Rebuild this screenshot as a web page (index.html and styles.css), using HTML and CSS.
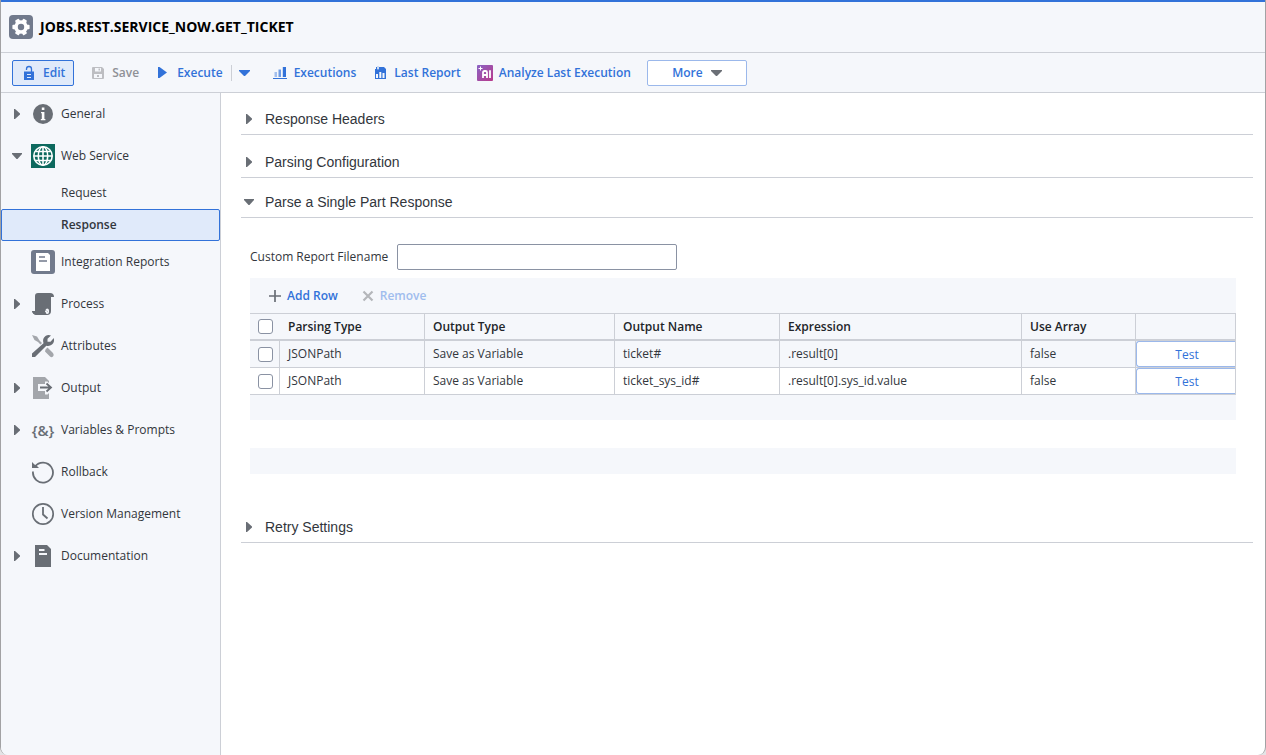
FILE: index.html
```html
<!DOCTYPE html>
<html lang="en">
<head>
<meta charset="utf-8">
<title>JOBS.REST.SERVICE_NOW.GET_TICKET</title>
<link rel="stylesheet" href="styles.css">
</head>
<body>
<div class="app">
  <header class="title-bar">
    <svg class="title-icon" width="24" height="24" viewBox="0 0 24 24">
      <rect width="24" height="24" rx="4" fill="#717a8c"/>
      <g fill="#fff">
        <circle cx="12" cy="12" r="6.8"/>
        <rect x="9.8" y="3.400" width="4.400" height="17.200" rx="1" transform="rotate(30 12 12)"/>
        <rect x="9.8" y="3.400" width="4.400" height="17.200" rx="1" transform="rotate(90 12 12)"/>
        <rect x="9.8" y="3.400" width="4.400" height="17.200" rx="1" transform="rotate(150 12 12)"/>
      </g>
      <circle cx="12" cy="12" r="3.200" fill="#717a8c"/>
    </svg>
    <h1 class="title">JOBS.REST.SERVICE_NOW.GET_TICKET</h1>
  </header>

  <div class="toolbar" role="toolbar" aria-label="Actions">
    <button class="tool tool-edit" type="button">
      <svg width="12" height="16" viewBox="0 0 12 16"><path d="M3.500 5V4a2.500 2.500 0 0 1 5 0v3" fill="none" stroke="#3272d9" stroke-width="1.300"/><path d="M1 6.500h10V15H1z" fill="#3272d9"/><path d="M4 9.500h4M4 12.500h4" stroke="#e0eafa"/></svg>
      Edit
    </button>
    <button class="tool tool-save" type="button" disabled>
      <svg width="12" height="12" viewBox="0 0 12 12"><path d="M1 0h9l2 2v9a1 1 0 0 1-1 1H1a1 1 0 0 1-1-1V1a1 1 0 0 1 1-1z" fill="#bdbec2"/><path d="M3 1h6v3.500H3zM2 7h8v4H2z" fill="#f5f7fb"/><path d="M6.500 1.500H8v2H6.500zM5 8h2v2H5z" fill="#bdbec2"/></svg>
      Save
    </button>
    <button class="tool tool-execute" type="button">
      <svg width="9" height="11" viewBox="0 0 9 11"><path d="M0 0h1.500L9 5.500 1.500 11H0z" fill="#3272d9"/></svg>
      Execute
    </button>
    <button class="tool tool-split" type="button" aria-label="Execute options">
      <svg width="11" height="6" viewBox="0 0 11 6"><path d="M0 0h11v1L6 6H5L0 1z" fill="#3272d9"/></svg>
    </button>
    <button class="tool tool-executions" type="button">
      <svg width="14" height="13" viewBox="0 0 14 13"><path d="M0 12.500h14" stroke="#3272d9"/><path d="M1.500 6h2.500v5H1.500z" fill="#a3bfed"/><path d="M5.500 3.500H8V11H5.500z" fill="#6f9ce4"/><path d="M9.800 1H13v10H9.800z" fill="#3272d9"/></svg>
      Executions
    </button>
    <button class="tool tool-report" type="button">
      <svg width="11" height="13" viewBox="0 0 11 13"><path d="M0 3h1V1h1v2h2V1h5l2 2v10H0z" fill="#3272d9"/><path d="M1 8h2v4H1zM4.300 6h2v6h-2zM7.500 7h2v5h-2z" fill="#f5f7fb"/><path d="M3 0v4" stroke="#a3bfed"/></svg>
      Last Report
    </button>
    <button class="tool tool-analyze" type="button">
      <svg width="16" height="16" viewBox="0 0 16 16"><defs><linearGradient id="ai" x1="0" y1="0" x2="1" y2="1"><stop offset="0" stop-color="#8a63c4"/><stop offset="1" stop-color="#b93a8b"/></linearGradient></defs><rect width="16" height="16" rx="1" fill="url(#ai)"/><path d="M3.500 1.500v4M1.500 3.500h4" stroke="#fff"/><path d="M6 13V7.500Q6 6 7.500 6h1Q10 6 10 7.500V13M6 10h4M13 5.200V13" fill="none" stroke="#fff" stroke-width="1.800"/></svg>
      Analyze Last Execution
    </button>
    <button class="tool tool-more" type="button">
      More
      <svg width="11" height="6" viewBox="0 0 11 6"><path d="M0 0h11v1L6 6H5L0 1z" fill="#6b6f76"/></svg>
    </button>
  </div>

  <div class="body">
    <nav class="sidebar" aria-label="Pages">
      <a class="nav" href="#general">
        <svg class="arrow" width="12" height="10" viewBox="0 0 12 10"><path d="M3 0h1l5 4.500v1L4 10H3z"/></svg>
        <svg class="icon" width="24" height="24" viewBox="0 0 24 24"><circle cx="12" cy="12" r="10"/><path d="M10.800 5.500h2.600V8h-2.600zM10 10h3.400v7h1v1.300H9.800V17h1v-5.700H10z" fill="#fff"/></svg>
        General
      </a>
      <a class="nav" href="#web-service">
        <svg class="arrow" width="12" height="10" viewBox="0 0 12 10"><path d="M1 2h10v1L6.500 8h-1L1 3z"/></svg>
        <svg class="icon" width="24" height="24" viewBox="0 0 24 24"><path d="M0 0h24v24H0z" fill="#0d695e"/><g fill="none" stroke="#fff" stroke-width="1.600"><circle cx="12" cy="12" r="9.200"/><ellipse cx="12" cy="12" rx="4.700" ry="9.200"/><path d="M12 3v18M3 12h18M4.500 7.500h15M4.500 16.500h15"/></g></svg>
        Web Service
      </a>
      <a class="nav nav-sub" href="#request">Request</a>
      <a class="nav nav-sub nav-active" href="#response" aria-current="page">Response</a>
      <a class="nav nav-leaf" href="#reports">
        <svg class="icon" width="24" height="24" viewBox="0 0 24 24"><rect width="24" height="24" rx="3" fill="#717a8c"/><path d="M5 3h12l2 2v16H5z" fill="#fff"/><path d="M8 7h6M8 11h8" stroke="#717a8c" stroke-width="1.700"/></svg>
        Integration Reports
      </a>
      <a class="nav" href="#process">
        <svg class="arrow" width="12" height="10" viewBox="0 0 12 10"><path d="M3 0h1l5 4.500v1L4 10H3z"/></svg>
        <svg class="icon" width="24" height="24" viewBox="0 0 24 24"><path d="M7 1h12q4 0 4 4h-3v14q0 4-4 4H6q-4 0-5-4h3V4q0-3 3-3z"/><path d="M4 19h10.500q-.3-2 1.500-2.500 2 0 2 2V20q0 2-1.700 2-1.800 0-1.800-2H4z" fill="#f5f7fb"/><path d="M1 19h13q0 3 2 4H6q-4 0-5-4zM15.500 18q1.500 1 .8 2.500"/></svg>
        Process
      </a>
      <a class="nav nav-leaf" href="#attributes">
        <svg class="icon" width="24" height="24" viewBox="0 0 24 24"><path d="M1 1l5 1.500 2.500 4L11 9l-1.500 1.500L7 8 3.500 6zM14.500 15.500l2-2L22 19q1.500 2 0 3.500t-3 0l-5-5z" fill="#a3a6ab"/><path d="M1 19.500L12.500 9.200Q11 4.500 14.500 2 17 .5 20 1.500l-3.500 3.200v3h3L22.800 4q1 4-1.800 6.500-2.500 2-5.700 1.200L4 23H1z"/></svg>
        Attributes
      </a>
      <a class="nav" href="#output">
        <svg class="arrow" width="12" height="10" viewBox="0 0 12 10"><path d="M3 0h1l5 4.500v1L4 10H3z"/></svg>
        <svg class="icon" width="24" height="24" viewBox="0 0 24 24"><path d="M2 1h12l4 4v18H2z" fill="#a3a6ab"/><path d="M7 8h7V5.500h2.500L23 12l-6.500 6.500H14V15H7z" fill="#f5f7fb"/><path d="M9 11.500h10M15.500 7.500l4.500 4-4.500 4" fill="none" stroke="#696e75" stroke-width="1.800"/></svg>
        Output
      </a>
      <a class="nav" href="#variables">
        <svg class="arrow" width="12" height="10" viewBox="0 0 12 10"><path d="M3 0h1l5 4.500v1L4 10H3z"/></svg>
        <span class="icon icon-text" aria-hidden="true">{&amp;}</span>
        Variables &amp; Prompts
      </a>
      <a class="nav nav-leaf" href="#rollback">
        <svg class="icon" width="24" height="24" viewBox="0 0 24 24"><path d="M4 6.500a10 10 0 1 1-2 5" fill="none" stroke="#696e75" stroke-width="1.800"/><path d="M1 2l2.500 2.500L6 6l2 2H1z"/></svg>
        Rollback
      </a>
      <a class="nav nav-leaf" href="#versions">
        <svg class="icon" width="24" height="24" viewBox="0 0 24 24"><circle cx="12" cy="12" r="10.200" fill="none" stroke="#696e75" stroke-width="1.700"/><path d="M12 5v7.500l4.500 4" fill="none" stroke="#696e75" stroke-width="1.800"/></svg>
        Version Management
      </a>
      <a class="nav" href="#documentation">
        <svg class="arrow" width="12" height="10" viewBox="0 0 12 10"><path d="M3 0h1l5 4.500v1L4 10H3z"/></svg>
        <svg class="icon" width="24" height="24" viewBox="0 0 24 24"><path d="M4 1h12l4 4v18H4z"/><path d="M8 6h5.500M8 10h8" stroke="#f5f7fb" stroke-width="1.800"/></svg>
        Documentation
      </a>
    </nav>

    <main class="content">
      <h2 class="section"><button type="button" aria-expanded="false"><svg class="arrow" width="12" height="10" viewBox="0 0 12 10"><path d="M3 0h1l5 4.500v1L4 10H3z"/></svg>Response Headers</button></h2>
      <h2 class="section"><button type="button" aria-expanded="false"><svg class="arrow" width="12" height="10" viewBox="0 0 12 10"><path d="M3 0h1l5 4.500v1L4 10H3z"/></svg>Parsing Configuration</button></h2>
      <h2 class="section section-open"><button type="button" aria-expanded="true"><svg class="arrow" width="12" height="10" viewBox="0 0 12 10"><path d="M1 2h10v1L6.500 8h-1L1 3z"/></svg>Parse a Single Part Response</button></h2>
      <div class="panel">
        <div class="field">
          <label for="filename">Custom Report Filename</label>
          <input class="text-box" id="filename" type="text">
        </div>
        <div class="grid">
          <div class="grid-tools">
            <button class="tool tool-add" type="button"><svg width="12" height="12" viewBox="0 0 12 12"><path d="M6 0v12M0 6h12" stroke="#696e75" stroke-width="1.700"/></svg>Add Row</button>
            <button class="tool tool-remove" type="button" disabled><svg width="12" height="12" viewBox="0 0 12 12"><path d="M1.500 1.500l9 9M10.500 1.500l-9 9" stroke="#b4b6ba" stroke-width="2.200"/></svg>Remove</button>
          </div>
          <table class="rows">
            <colgroup><col class="col-check"><col class="col-parsing"><col class="col-type"><col class="col-name"><col><col class="col-array"><col class="col-test"></colgroup>
            <thead>
              <tr><th class="check"><input class="tick" type="checkbox" aria-label="Select all rows"></th><th>Parsing Type</th><th>Output Type</th><th>Output Name</th><th>Expression</th><th>Use Array</th><th></th></tr>
            </thead>
            <tbody>
              <tr><td class="check"><input class="tick" type="checkbox" aria-label="Select ticket#"></td><td>JSONPath</td><td>Save as Variable</td><td>ticket#</td><td>.result[0]</td><td>false</td><td class="action"><button class="test" type="button">Test</button></td></tr>
              <tr><td class="check"><input class="tick" type="checkbox" aria-label="Select ticket_sys_id#"></td><td>JSONPath</td><td>Save as Variable</td><td>ticket_sys_id#</td><td>.result[0].sys_id.value</td><td>false</td><td class="action"><button class="test" type="button">Test</button></td></tr>
            </tbody>
          </table>
        </div>
        <div class="band"></div>
      </div>
      <h2 class="section"><button type="button" aria-expanded="false"><svg class="arrow" width="12" height="10" viewBox="0 0 12 10"><path d="M3 0h1l5 4.500v1L4 10H3z"/></svg>Retry Settings</button></h2>
    </main>
  </div>
</div>
</body>
</html>
```
FILE: styles.css
```css
* { box-sizing: border-box; }

body {
  margin: 0;
  background: #e4e4e6;
  color: #32363c;
  font: 12px/18px "Open Sans", "Noto Sans", sans-serif;
}

button, input { font: inherit; }
svg { display: block; flex: none; }

.app {
  display: flex;
  flex-direction: column;
  min-height: 100vh;
  overflow: hidden;
  border: 1px solid #a2a2a4;
  border-width: 0 1px;
  border-radius: 0 0 8px 8px;
  background: #fff;
}

.title-bar {
  display: flex;
  align-items: center;
  gap: 7px;
  height: 53px;
  padding-left: 8px;
  border-top: 2px solid #3272d9;
  border-bottom: 1px solid #cccfd6;
  background: #f5f7fb;
}

.title {
  margin: 0;
  color: #000;
  font-size: 14px;
  font-weight: 700;
}

.toolbar {
  display: flex;
  align-items: center;
  height: 40px;
  padding-left: 11px;
  border-bottom: 1px solid #cccfd6;
  background: #f5f7fb;
}

.tool {
  display: flex;
  align-items: center;
  gap: 8px;
  padding: 0;
  border: 0;
  background: none;
  color: #3272d9;
  font-weight: 600;
  white-space: nowrap;
}

.tool-edit {
  height: 26px;
  padding: 0 8px 0 10px;
  border: 1px solid #3272d9;
  border-radius: 2px;
  background: #e0eafa;
}

.tool-save { margin-left: 18px; color: #8f9196; }
.tool-execute { gap: 10px; margin-left: 19px; }
.tool-split { height: 16px; margin-left: 8px; padding-left: 7px; border-left: 1px solid #cccfd6; }
.tool-executions { gap: 7px; margin-left: 23px; }
.tool-report { margin-left: 19px; }
.tool-analyze { gap: 6px; margin-left: 16px; }

.tool-more {
  justify-content: center;
  width: 100px;
  height: 26px;
  margin-left: 16px;
  border: 1px solid #9bb8eb;
  border-radius: 2px;
  background: #fff;
}

.body { display: flex; flex: 1; }

.sidebar {
  flex: none;
  width: 220px;
  border-right: 1px solid #cccfd6;
  background: #f5f7fb;
}

.nav {
  display: flex;
  align-items: center;
  height: 42px;
  padding-left: 10px;
  color: #32363c;
  text-decoration: none;
}

.nav-sub { height: 32px; padding-left: 60px; }
.nav-leaf { padding-left: 30px; }

.nav-active {
  padding-left: 59px;
  border: 1px solid #3272d9;
  border-radius: 2px;
  background: #e0eafa;
  font-weight: 600;
}

.arrow { fill: #696e75; }

.icon {
  width: 24px;
  margin: 0 6px 0 8px;
  fill: #696e75;
}

.nav-leaf .icon { margin-left: 0; }

.icon-text {
  color: #696e75;
  font-size: 15px;
  font-weight: 600;
  text-align: center;
}

.content {
  flex: 1;
  min-width: 0;
  padding: 11px 12px 0 20px;
}

.section {
  margin: 0 0 12px;
  border-bottom: 1px solid #cccfd6;
}

.section:has(+ .section-open) { margin-bottom: 9px; }
.section-open { margin-bottom: 0; }

.section button {
  display: flex;
  align-items: center;
  gap: 10px;
  width: 100%;
  height: 30px;
  padding: 0 2px;
  border: 0;
  background: none;
  color: #32363c;
  font: 14px/20px "Liberation Sans", Arial, sans-serif;
}

.panel { padding: 26px 17px 38px 9px; }

.field {
  display: flex;
  align-items: center;
  gap: 9px;
  margin-bottom: 8px;
}

.text-box {
  width: 280px;
  height: 26px;
  border: 1px solid #8a92a3;
  border-radius: 2px;
  background: #fff;
}

.grid {
  padding-bottom: 25px;
  background: #f5f7fb;
}

.grid-tools {
  display: flex;
  gap: 24px;
  height: 35px;
  padding-left: 19px;
}

.tool-add, .tool-remove { gap: 6px; }
.tool-remove { color: #a0bdee; }

.rows {
  width: 100%;
  border-spacing: 0;
  table-layout: fixed;
}

.col-check { width: 30px; }
.col-parsing { width: 145px; }
.col-type { width: 190px; }
.col-name { width: 165px; }
.col-array { width: 114px; }
.col-test { width: 100px; }

.rows th, .rows td {
  height: 27px;
  padding: 0 8px;
  border: 0 solid #cccfd6;
  border-width: 0 1px 1px 0;
  text-align: left;
}

.rows th {
  height: 28px;
  border-width: 1px 1px 2px 0;
  color: #222529;
  font-weight: 600;
}

.rows th.check { border-right: 0; }
.rows .check { padding-right: 0; }
.rows tbody tr:nth-child(even) { background: #fff; }
.rows .action { padding: 0; }

.tick {
  display: block;
  width: 15px;
  height: 15px;
  margin: 0;
  appearance: none;
  border: 1px solid #8a92a3;
  border-radius: 3px;
  background: #fff;
}

.test {
  display: block;
  width: 100%;
  height: 26px;
  padding: 2px 0 0 2px;
  border: 1px solid #9bb8eb;
  border-right: 0;
  border-radius: 3px 0 0 3px;
  background: #fff;
  color: #3272d9;
}

.band {
  height: 26px;
  margin-top: 28px;
  background: #f5f7fb;
}
```
